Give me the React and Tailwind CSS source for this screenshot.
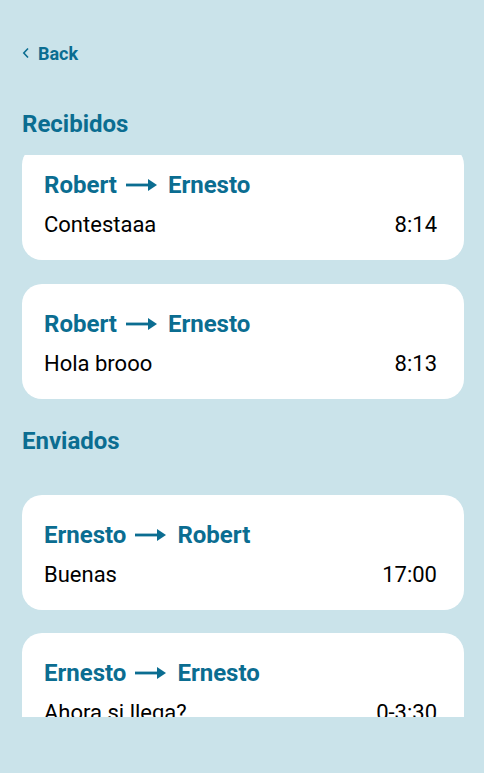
import React from 'react';

const recibidos = [
  { from: 'Robert', to: 'Ernesto', text: 'Contestaaa', time: '8:14' },
  { from: 'Robert', to: 'Ernesto', text: 'Hola brooo', time: '8:13' },
];

const enviados = [
  { from: 'Ernesto', to: 'Robert', text: 'Buenas', time: '17:00' },
  { from: 'Ernesto', to: 'Ernesto', text: 'Ahora si llega?', time: '0-3:30' },
];

function Arrow() {
  return (
    <svg width="32" height="14" viewBox="0 0 32 14" className="ml-[9px] mr-[10px] shrink-0">
      <rect x="0" y="5.6" width="24" height="2.8" fill="currentColor" />
      <path d="M22 1 L31 7 L22 13 Z" fill="currentColor" />
    </svg>
  );
}

function MessageCard({ m }) {
  return (
    <div className="bg-white rounded-[20px] h-[115px] pt-[25px] pl-[22px] pr-[27px] shrink-0">
      <div className="flex items-center text-[24px] leading-[30px] font-bold text-[#0b6d91]">
        <span>{m.from}</span>
        <Arrow />
        <span>{m.to}</span>
      </div>
      <div className="flex justify-between mt-[11px] text-[22px] leading-[28px] text-black">
        <span>{m.text}</span>
        <span>{m.time}</span>
      </div>
    </div>
  );
}

export default function App() {
  return (
    <div
      className="w-[484px] h-[773px] bg-[#cae3ea] pl-[22px] pr-[20px] pt-[40px] overflow-hidden"
      style={{ fontFamily: 'Roboto, "Noto Sans", sans-serif' }}
    >
      <div className="flex items-center gap-[8px] h-[26px] text-[#0b6d91]">
        <svg width="8" height="12" viewBox="0 0 8 12">
          <path d="M6 1.5 L1.8 6 L6 10.5" fill="none" stroke="currentColor" strokeWidth="1.6" />
        </svg>
        <span className="text-[18px] font-bold">Back</span>
      </div>

      <h2 className="mt-[43px] text-[24px] leading-[30px] font-bold text-[#0b6d91]">Recibidos</h2>
      <div className="mt-[16px] h-[255px] overflow-hidden">
        <div className="-mt-[10px] flex flex-col gap-[24px]">
          {recibidos.map((m, i) => (
            <MessageCard key={i} m={m} />
          ))}
        </div>
      </div>

      <h2 className="mt-[16px] text-[24px] leading-[30px] font-bold text-[#0b6d91]">Enviados</h2>
      <div className="mt-[39px] h-[222px] overflow-hidden flex flex-col gap-[23px]">
        {enviados.map((m, i) => (
          <MessageCard key={i} m={m} />
        ))}
      </div>
    </div>
  );
}
